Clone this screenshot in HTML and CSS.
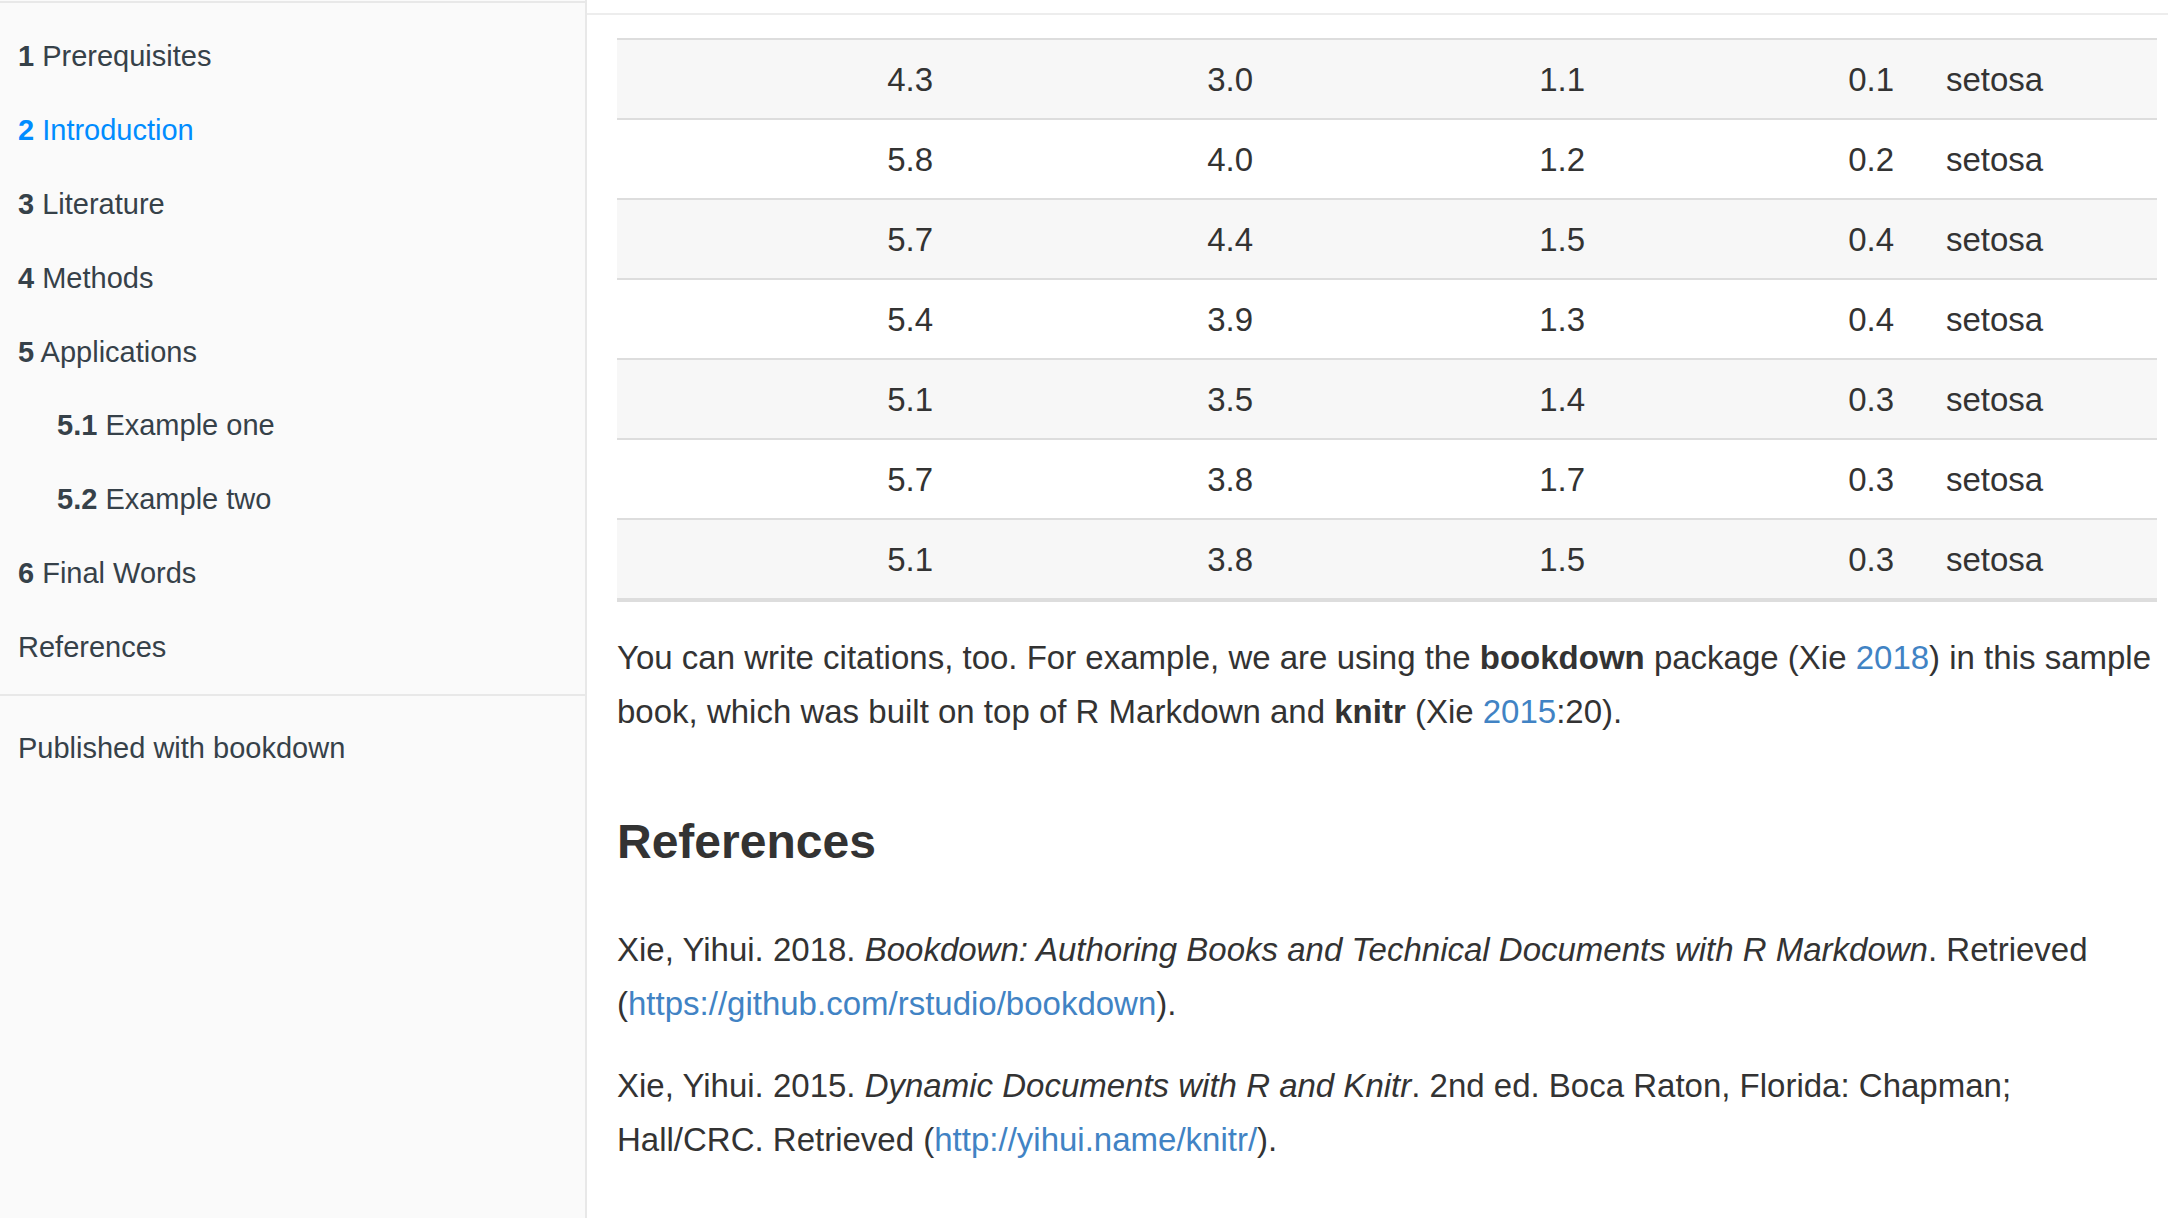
FILE: index.html
```html
<!DOCTYPE html>
<html lang="en">
<head>
<meta charset="utf-8">
<title>Introduction</title>
<link rel="stylesheet" href="styles.css">
</head>
<body>
<div class="book">
  <nav class="summary">
    <div class="divider top"></div>
    <ul class="chapters">
      <li><a class="item"><b>1</b> Prerequisites</a></li>
      <li><a class="item active"><b>2</b> Introduction</a></li>
      <li><a class="item"><b>3</b> Literature</a></li>
      <li><a class="item"><b>4</b> Methods</a></li>
      <li><a class="item"><b>5</b> Applications</a>
        <ul class="sub">
          <li><a class="item"><b>5.1</b> Example one</a></li>
          <li><a class="item"><b>5.2</b> Example two</a></li>
        </ul>
      </li>
      <li><a class="item"><b>6</b> Final Words</a></li>
      <li><a class="item">References</a></li>
    </ul>
    <div class="divider"></div>
    <a class="item published">Published with bookdown</a>
  </nav>
  <main class="page">
    <div class="header"></div>
    <section class="content">
      <table class="data">
        <colgroup>
          <col class="c1"><col class="c2"><col class="c3"><col class="c4"><col class="c5">
        </colgroup>
        <tbody>
          <tr class="odd"><td class="num">4.3</td><td class="num">3.0</td><td class="num">1.1</td><td class="num">0.1</td><td>setosa</td></tr>
          <tr><td class="num">5.8</td><td class="num">4.0</td><td class="num">1.2</td><td class="num">0.2</td><td>setosa</td></tr>
          <tr class="odd"><td class="num">5.7</td><td class="num">4.4</td><td class="num">1.5</td><td class="num">0.4</td><td>setosa</td></tr>
          <tr><td class="num">5.4</td><td class="num">3.9</td><td class="num">1.3</td><td class="num">0.4</td><td>setosa</td></tr>
          <tr class="odd"><td class="num">5.1</td><td class="num">3.5</td><td class="num">1.4</td><td class="num">0.3</td><td>setosa</td></tr>
          <tr><td class="num">5.7</td><td class="num">3.8</td><td class="num">1.7</td><td class="num">0.3</td><td>setosa</td></tr>
          <tr class="odd last"><td class="num">5.1</td><td class="num">3.8</td><td class="num">1.5</td><td class="num">0.3</td><td>setosa</td></tr>
        </tbody>
      </table>
      <p class="para">You can write citations, too. For example, we are using the <strong>bookdown</strong> package (Xie <a class="link">2018</a>) in this sample book, which was built on top of R Markdown and <strong>knitr</strong> (Xie <a class="link">2015</a>:20).</p>
      <h3 class="refs-title">References</h3>
      <div class="refs">
        <p class="ref">Xie, Yihui. 2018. <em>Bookdown: Authoring Books and Technical Documents with R Markdown</em>. Retrieved (<a class="link">https://github.com/rstudio/bookdown</a>).</p>
        <p class="ref">Xie, Yihui. 2015. <em>Dynamic Documents with R and Knitr</em>. 2nd ed. Boca Raton, Florida: Chapman; Hall/CRC. Retrieved (<a class="link">http://yihui.name/knitr/</a>).</p>
      </div>
    </section>
  </main>
</div>
</body>
</html>
```

FILE: styles.css
```css
html, body {
  margin: 0;
  padding: 0;
  background: #ffffff;
}

body {
  font-family: "Liberation Sans", Arial, Helvetica, sans-serif;
  color: #333333;
}

.book {
  display: flex;
  height: 1218px;
  overflow: hidden;
}

/* ---------- sidebar ---------- */
.summary {
  width: 585px;
  flex: 0 0 585px;
  background: #fafafa;
  border-right: 2px solid #e8e8e8;
  color: #364149;
  font-size: 29px;
  line-height: 34px;
}

.divider {
  height: 2px;
  background: #e8e8e8;
  margin: 11px 0 14px;
}

.divider.top {
  margin: 1px 0 15px;
}

.chapters,
.sub {
  list-style: none;
  margin: 0;
  padding: 0;
}

.item {
  display: block;
  padding: 21px 18px 18.9px;
  color: #364149;
  text-decoration: none;
  white-space: nowrap;
}

.item b {
  font-weight: bold;
}

.item.active {
  color: #008cff;
}

.sub .item {
  padding-left: 57px;
}

/* ---------- page ---------- */
.page {
  flex: 1 1 auto;
  min-width: 0;
}

.header {
  height: 13px;
  border-bottom: 2px solid #ededed;
}

.content {
  padding: 23px 0 0 30px;
  width: 1545px;
  font-size: 33px;
  line-height: 54.4px;
}

.data {
  width: 1540px;
  table-layout: fixed;
  border-collapse: collapse;
  border-spacing: 0;
  margin: 0 0 29px;
}

.c1 { width: 342px; }
.c2 { width: 320px; }
.c3 { width: 332px; }
.c4 { width: 309px; }
.c5 { width: 237px; }

.data td {
  padding: 13px 26px 11px;
  line-height: 54px;
  border-top: 2px solid #dddddd;
  color: #333333;
  text-align: left;
  white-space: nowrap;
}

.data td.num {
  text-align: right;
}

.data tr.odd {
  background: #f7f7f7;
}

.data tr.last td {
  border-bottom: 4px solid #dddddd;
}

.para {
  margin: 0;
}

.para strong {
  font-weight: bold;
}

.link {
  color: #4183c4;
  text-decoration: none;
}

.refs-title {
  margin: 61px 0 40px;
  font-size: 48px;
  line-height: 82px;
  font-weight: bold;
  color: #333333;
}

.refs {
  margin: 0;
}

.ref {
  margin: 0 0 27px;
}
```
